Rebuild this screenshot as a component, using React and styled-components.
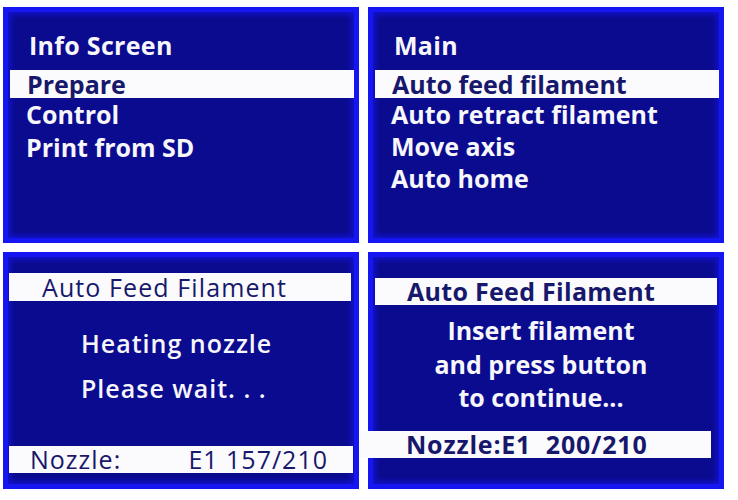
import React from "react";
import styled, { createGlobalStyle } from "styled-components";

const Global = createGlobalStyle`
  html, body { margin: 0; padding: 0; background: #ffffff; }
  body { font-family: "Open Sans", "Noto Sans", sans-serif; }
`;

const Page = styled.div`
  width: 738px;
  height: 500px;
  display: grid;
  grid-template-columns: 356px 356px;
  grid-template-rows: 236px 237px;
  column-gap: 9px;
  row-gap: 9px;
  padding: 7px 0 0 3px;
  box-sizing: border-box;
`;

const Panel = styled.div`
  box-sizing: border-box;
  border: 5px solid #1616f2;
  background: #0b0b8f;
  box-shadow: inset 0 0 5px 3px #1212c8;
  display: flex;
  flex-direction: column;
  padding-top: ${(p) => p.$top}px;
  color: #f6f6fb;
  font-size: 25px;
  overflow: visible;
`;

const Heading = styled.div`
  font-weight: 700;
  line-height: 33px;
  letter-spacing: 0.3px;
  padding-left: ${(p) => p.$indent}px;
  margin-bottom: 8px;
`;

const Item = styled.div`
  font-weight: 700;
  line-height: ${(p) => (p.$selected ? 28 : p.$lh)}px;
  height: ${(p) => (p.$selected ? 28 : p.$lh)}px;
  padding-left: ${(p) => p.$indent}px;
  margin: 0 0 0 ${(p) => (p.$selected ? 2 : 0)}px;
  background: ${(p) => (p.$selected ? "#fbfbfd" : "transparent")};
  color: ${(p) => (p.$selected ? "#17176c" : "#f6f6fb")};
  white-space: nowrap;
`;

const Bar = styled.div`
  background: #fbfbfd;
  color: #17176c;
  height: ${(p) => p.$h}px;
  line-height: ${(p) => p.$h}px;
  font-weight: ${(p) => p.$weight};
  letter-spacing: ${(p) => p.$ls || 0}px;
  margin-left: ${(p) => p.$ml}px;
  margin-right: ${(p) => p.$mr}px;
  margin-top: ${(p) => p.$mt || 0}px;
  margin-bottom: ${(p) => p.$mb || 0}px;
  padding-left: ${(p) => p.$pl}px;
  padding-right: ${(p) => p.$pr || 0}px;
  display: flex;
  justify-content: ${(p) => p.$justify || "flex-start"};
  white-space: pre;
`;

const Message = styled.div`
  display: flex;
  flex-direction: column;
  align-items: ${(p) => (p.$center ? "center" : "flex-start")};
  padding-left: ${(p) => p.$pl || 0}px;
  padding-right: ${(p) => p.$pr || 0}px;
  margin-top: ${(p) => p.$mt}px;
  font-weight: ${(p) => p.$weight};
  letter-spacing: ${(p) => p.$ls || 0}px;
  line-height: ${(p) => p.$lh}px;
  white-space: pre;
`;

const Spacer = styled.div`
  flex: 1;
`;

function MenuPanel({ title, items, lh }) {
  return (
    <Panel $top={17}>
      <Heading $indent={21}>{title}</Heading>
      {items.map((t, i) => (
        <Item key={t} $selected={i === 0} $lh={lh} $indent={i === 0 ? 17 : 18}>
          {t}
        </Item>
      ))}
    </Panel>
  );
}

export default function App() {
  return (
    <>
      <Global />
      <Page>
        <MenuPanel title="Info Screen" items={["Prepare", "Control", "Print from SD"]} lh={33} />
        <MenuPanel
          title="Main"
          items={["Auto feed filament", "Auto retract filament", "Move axis", "Auto home"]}
          lh={32}
        />
        <Panel $top={16}>
          <Bar $h={28} $weight={500} $ls={1.1} $ml={1} $mr={3} $pl={33}>
            Auto Feed Filament
          </Bar>
          <Message $mt={20} $pl={73} $lh={45} $weight={600} $ls={1}>
            <span>Heating nozzle</span>
            <span>Please wait. . .</span>
          </Message>
          <Spacer />
          <Bar
            $h={27}
            $weight={500}
            $ls={1}
            $ml={1}
            $mr={1}
            $pl={21}
            $pr={25}
            $mb={11}
            $justify="space-between"
          >
            <span>Nozzle:</span>
            <span>E1 157/210</span>
          </Bar>
        </Panel>
        <Panel $top={21}>
          <Bar $h={27} $weight={700} $ls={0.3} $ml={2} $mr={2} $pl={32}>
            Auto Feed Filament
          </Bar>
          <Message $center $mt={9} $pr={10} $lh={33.5} $weight={700}>
            <span>Insert filament</span>
            <span>and press button</span>
            <span>to continue...</span>
          </Message>
          <Bar $h={27} $weight={700} $ls={0.8} $ml={-13} $mr={8} $mt={16} $pl={46}>
            {"Nozzle:E1  200/210"}
          </Bar>
        </Panel>
      </Page>
    </>
  );
}
